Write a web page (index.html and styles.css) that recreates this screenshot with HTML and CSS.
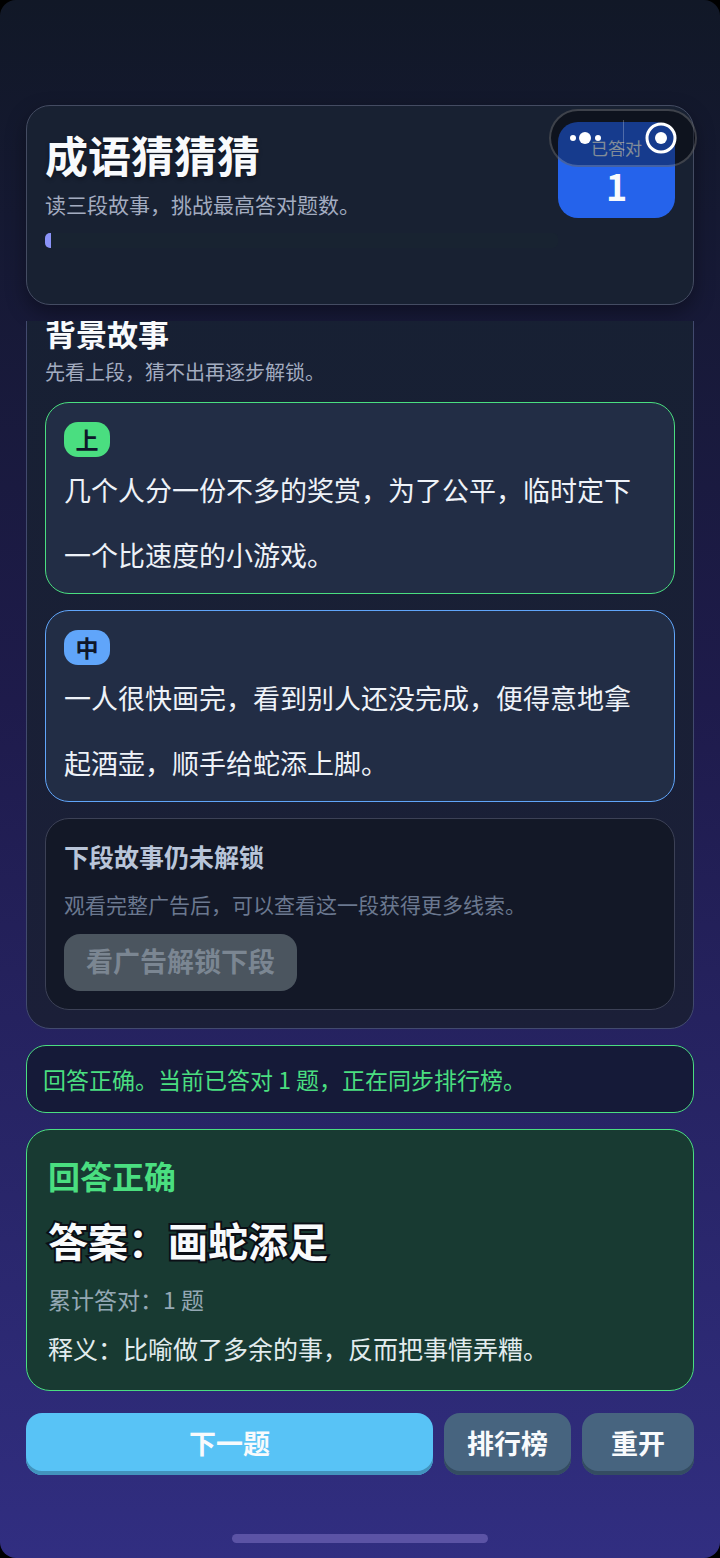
FILE: index.html
```html
<!DOCTYPE html>
<html lang="zh-CN">
<head>
    <meta charset="UTF-8">
    <meta name="viewport" content="width=device-width, initial-scale=1.0">
    <title>成语猜猜猜</title>
    <link rel="stylesheet" href="styles.css">
</head>
<body>
    <div class="app">
        <!-- 小程序胶囊按钮 -->
        <div class="capsule">
            <button type="button" class="capsule-btn" aria-label="更多">
                <svg width="34" height="16" viewBox="0 0 34 16" fill="#fff">
                    <circle cx="5" cy="8" r="3"/>
                    <circle cx="17" cy="8" r="6"/>
                    <circle cx="30" cy="8" r="3"/>
                </svg>
            </button>
            <span class="capsule-line"></span>
            <button type="button" class="capsule-btn" aria-label="关闭">
                <svg width="32" height="32" viewBox="0 0 32 32">
                    <circle cx="16" cy="16" r="14" fill="none" stroke="#fff" stroke-width="3"/>
                    <circle cx="16" cy="16" r="6" fill="#fff"/>
                </svg>
            </button>
        </div>

        <header class="header">
            <div class="header-main">
                <h1>成语猜猜猜</h1>
                <p class="subtitle">读三段故事，挑战最高答对题数。</p>
                <div class="progress">
                    <div class="progress-fill" style="width: 1%"></div>
                </div>
            </div>
            <div class="score">
                <span class="score-label">已答对</span>
                <strong class="score-value">1</strong>
            </div>
        </header>

        <main class="content">
            <section class="panel">
                <h2>背景故事</h2>
                <p class="panel-tip">先看上段，猜不出再逐步解锁。</p>

                <div class="story story-up">
                    <span class="tag">上</span>
                    <p>几个人分一份不多的奖赏，为了公平，临时定下一个比速度的小游戏。</p>
                </div>

                <div class="story story-mid">
                    <span class="tag">中</span>
                    <p>一人很快画完，看到别人还没完成，便得意地拿起酒壶，顺手给蛇添上脚。</p>
                </div>

                <div class="locked">
                    <h3>下段故事仍未解锁</h3>
                    <p>观看完整广告后，可以查看这一段获得更多线索。</p>
                    <button type="button" class="unlock-btn" disabled>看广告解锁下段</button>
                </div>
            </section>

            <p class="status">回答正确。当前已答对 1 题，正在同步排行榜。</p>

            <section class="result">
                <h2>回答正确</h2>
                <p class="answer">答案：画蛇添足</p>
                <p class="total">累计答对：1 题</p>
                <p class="meaning">释义：比喻做了多余的事，反而把事情弄糟。</p>
            </section>
        </main>

        <footer class="actions">
            <button type="button" class="btn btn-next">下一题</button>
            <button type="button" class="btn">排行榜</button>
            <button type="button" class="btn">重开</button>
        </footer>

        <div class="home-bar"></div>
    </div>
</body>
</html>
```
FILE: styles.css
```css
* {
    margin: 0;
    padding: 0;
    box-sizing: border-box;
}

body {
    background: #000;
    font-family: "Noto Sans CJK SC", "Noto Sans", sans-serif;
    color: #f8fafc;
}

.app {
    position: relative;
    display: flex;
    flex-direction: column;
    height: 100vh;
    padding: 105px 26px 15px;
    border-radius: 16px;
    background: linear-gradient(180deg, #111827 0%, #1e1b4b 45%, #312e81 100%);
}

/* 胶囊按钮 */
.capsule {
    position: absolute;
    z-index: 2;
    top: 109px;
    right: 23px;
    display: flex;
    align-items: center;
    justify-content: space-between;
    width: 148px;
    height: 58px;
    padding: 0 18px 0 17px;
    border: 2px solid rgba(255, 255, 255, 0.2);
    border-radius: 29px;
    background: rgba(0, 0, 0, 0.4);
}

.capsule-btn {
    display: flex;
    border: none;
    background: none;
    cursor: pointer;
}

.capsule-line {
    width: 1px;
    height: 36px;
    background: rgba(255, 255, 255, 0.25);
}

/* 顶部 */
.header {
    display: flex;
    align-items: flex-start;
    min-height: 200px;
    padding: 16px 18px;
    border: 1px solid #444c62;
    border-radius: 24px;
    background: #182132;
    box-shadow: 0 8px 20px rgba(0, 0, 0, 0.35);
}

.header-main {
    flex: 1;
}

h1 {
    font-size: 43px;
    line-height: 64px;
    text-shadow: 0 2px 4px rgba(0, 0, 0, 0.4);
}

.subtitle {
    font-size: 21px;
    line-height: 36px;
    color: #a3acc0;
}

.progress {
    height: 15px;
    margin-top: 11px;
    border-radius: 5px;
    background: #182331;
    overflow: hidden;
}

.progress-fill {
    height: 100%;
    min-width: 6px;
    background: #8b93f8;
}

.score {
    display: flex;
    flex-direction: column;
    align-items: center;
    width: 117px;
    padding: 10px 0 12px;
    border-radius: 20px;
    background: #2563eb;
}

.score-label {
    font-size: 17px;
    line-height: 32px;
    color: #dbeafe;
}

.score-value {
    font-size: 36px;
    line-height: 42px;
}

/* 滚动内容，停在底部 */
.content {
    flex: 1;
    display: flex;
    flex-direction: column;
    justify-content: flex-end;
    gap: 16px;
    min-height: 0;
    margin-top: 16px;
    overflow: hidden;
}

.panel {
    display: flex;
    flex-direction: column;
    flex-shrink: 0;
    gap: 16px;
    padding: 18px;
    border: 1px solid #424a6e;
    border-radius: 24px;
    background: linear-gradient(180deg, #172033, #1b1f38);
}

.panel h2 {
    font-size: 31px;
    line-height: 46px;
}

.panel-tip {
    margin-top: -14px;
    font-size: 20px;
    line-height: 28px;
    color: #a3acc0;
}

.story,
.locked {
    min-height: 192px;
    padding: 19px 18px 18px;
    border: 1px solid #3c4156;
    border-radius: 24px;
    background: #222d45;
}

.story {
    padding-bottom: 5px;
}

.story-up {
    border-color: #4ade80;
}

.story-mid {
    border-color: #60a5fa;
}

.tag {
    display: block;
    width: 46px;
    border-radius: 14px;
    font-size: 23px;
    font-weight: bold;
    line-height: 35px;
    text-align: center;
    color: #0f172a;
}

.story-up .tag {
    background: #4ade80;
}

.story-mid .tag {
    background: #60a5fa;
}

.story p {
    font-size: 27px;
    line-height: 65px;
    color: #eef2f8;
}

.locked {
    background: #131827;
}

.locked h3 {
    font-size: 25px;
    line-height: 36px;
    color: #b9c5d9;
}

.locked p {
    margin: 12px 0;
    font-size: 21px;
    line-height: 36px;
    color: #6b7890;
}

.unlock-btn {
    display: block;
    height: 57px;
    padding: 0 22px 4px;
    border: none;
    border-radius: 16px;
    background: #4b555f;
    font-family: inherit;
    font-size: 27px;
    font-weight: bold;
    color: #7b8692;
}

.status {
    flex-shrink: 0;
    padding: 0 16px;
    border: 1px solid #4ade80;
    border-radius: 20px;
    background: #151a38;
    font-size: 23px;
    line-height: 66px;
    color: #4ade80;
}

/* 答题结果 */
.result {
    display: flex;
    flex-direction: column;
    flex-shrink: 0;
    gap: 11px;
    padding: 21px 21px 22px;
    border: 1px solid #4ade80;
    border-radius: 24px;
    background: #183a32;
}

.result h2 {
    font-size: 32px;
    line-height: 48px;
    color: #4ade80;
}

.answer {
    font-size: 40px;
    font-weight: bold;
    line-height: 60px;
    -webkit-text-stroke: 4px #0b0f16;
    paint-order: stroke fill;
}

.total {
    font-size: 23px;
    line-height: 36px;
    color: #94a8b4;
}

.meaning {
    font-size: 25px;
    line-height: 40px;
    color: #e2ecee;
}

/* 底部按钮 */
.actions {
    display: flex;
    gap: 11px;
    margin-top: 22px;
}

.btn {
    height: 62px;
    padding: 0 23px 3px;
    border: none;
    border-radius: 16px;
    background: #47647f;
    box-shadow: inset 0 -4px 0 #344c62;
    font-family: inherit;
    font-size: 27px;
    font-weight: bold;
    color: #f8fafc;
    cursor: pointer;
}

.btn:last-child {
    padding: 0 29px 3px;
}

.btn-next {
    flex: 1;
    background: #58c3f6;
    box-shadow: inset 0 -4px 0 #4293bd;
}

.home-bar {
    width: 256px;
    height: 9px;
    margin: 59px auto 0;
    border-radius: 5px;
    background: #5b53a5;
}
```
